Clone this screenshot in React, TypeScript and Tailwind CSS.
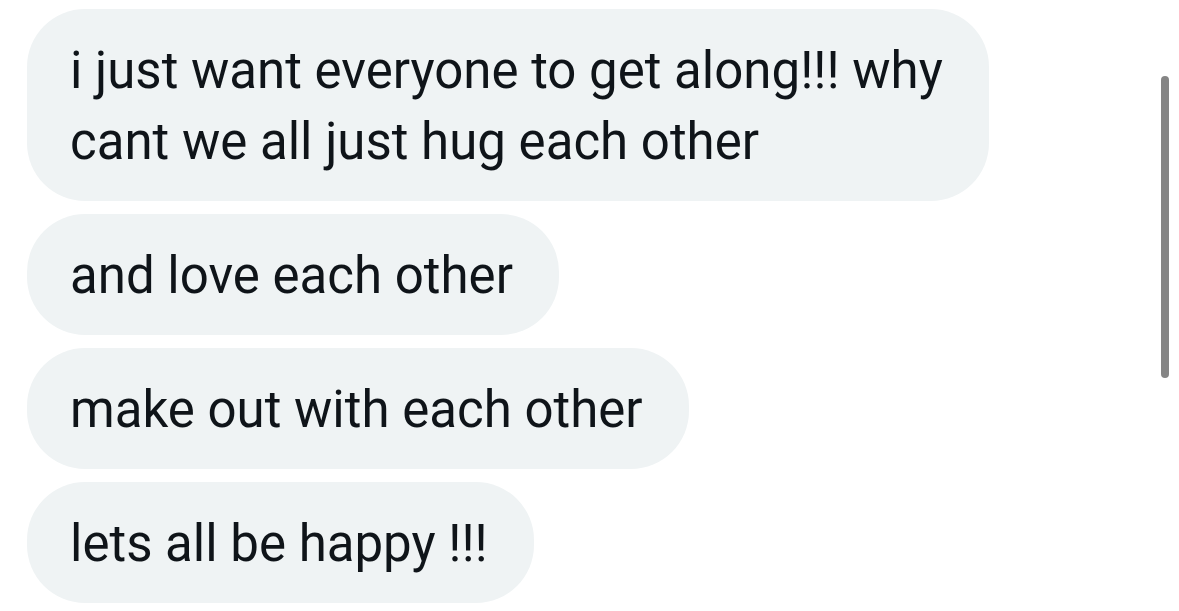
import React from 'react';

const messages: React.ReactNode[] = [
  <>i just want everyone to get along!!! why<br />cant we all just hug each other</>,
  'and love each other',
  'make out with each other',
  'lets all be happy !!!',
];

function Bubble({ children }: { children: React.ReactNode }) {
  return (
    <div className="w-fit whitespace-nowrap rounded-[58px] bg-[#eff3f4] pt-[26px] pb-[24px] pl-[43px] pr-[46px] text-[51px] leading-[71px] text-[#0f1419]">
      {children}
    </div>
  );
}

export default function App() {
  return (
    <div
      className="relative h-[611px] w-[1179px] overflow-hidden bg-white"
      style={{ fontFamily: 'Roboto, "Liberation Sans", sans-serif' }}
    >
      <div className="flex flex-col gap-[13px] pl-[27px] pt-[9px]">
        {messages.map((m, i) => (
          <Bubble key={i}>{m}</Bubble>
        ))}
      </div>

      {/* scrollbar thumb */}
      <div className="absolute left-[1161px] top-[76px] h-[302px] w-[8px] rounded-full bg-[#858585]" />
    </div>
  );
}
